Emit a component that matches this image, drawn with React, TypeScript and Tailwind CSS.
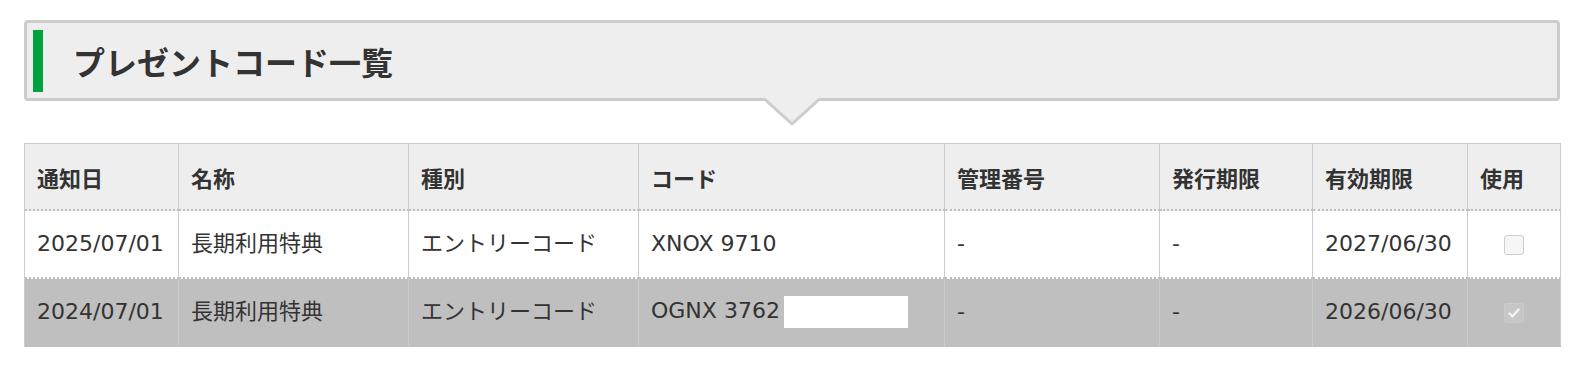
import { Fragment } from 'react'

type GiftCode = {
  notified: string
  name: string
  kind: string
  code: string
  hidden: boolean
  serial: string
  issueLimit: string
  expires: string
  used: boolean
}

const colWidths = [154, 230, 230, 306, 215, 153, 155, 93]

const headers = ['通知日', '名称', '種別', 'コード', '管理番号', '発行期限', '有効期限', '使用']

const codes: GiftCode[] = [
  {
    notified: '2025/07/01',
    name: '長期利用特典',
    kind: 'エントリーコード',
    code: 'XNOX 9710',
    hidden: false,
    serial: '-',
    issueLimit: '-',
    expires: '2027/06/30',
    used: false,
  },
  {
    notified: '2024/07/01',
    name: '長期利用特典',
    kind: 'エントリーコード',
    code: 'OGNX 3762',
    hidden: true,
    serial: '-',
    issueLimit: '-',
    expires: '2026/06/30',
    used: true,
  },
]

function UsedBox({ checked }: { checked: boolean }) {
  if (!checked) {
    return (
      <span className="inline-block w-[20px] h-[20px] rounded-[3px] border border-[#cfcfcf] bg-[#f6f6f6] align-middle" />
    )
  }
  return (
    <span className="inline-flex items-center justify-center w-[20px] h-[20px] rounded-[3px] border border-[#cbcbcb] bg-[#c6c6c6] align-middle">
      <svg width="14" height="14" viewBox="0 0 14 14">
        <path d="M2.5 7.5 L5.5 10.5 L11.5 3.5" fill="none" stroke="#f4f4f4" strokeWidth="2.4" strokeLinecap="round" strokeLinejoin="round" />
      </svg>
    </span>
  )
}

export default function App() {
  // solid column rules, dotted row rules
  const cell =
    'h-[68px] px-[12px] border-solid border-r border-r-[#cccccc] border-b-2 border-b-[#bdbdbd] [border-bottom-style:dotted] align-middle'

  return (
    <div className="w-[1582px] bg-white pt-[20px] pl-[24px] pr-[22px] pb-[20px] text-[#333333] font-['DejaVu_Sans','Noto_Sans_CJK_JP',sans-serif]">
      {/* page heading with the little pointer under it */}
      <div className="relative">
        <div className="flex items-center h-[81px] pl-[6px] bg-[#eeeeee] border-[3px] border-[#cccccc] rounded-[4px]">
          <div className="w-[10px] h-[62px] bg-[#00a23e]" />
          <h1 className="ml-[30px] text-[32px] leading-none font-bold font-['Noto_Sans_CJK_JP',sans-serif] text-[#333333]">
            プレゼントコード一覧
          </h1>
        </div>
        <svg
          className="absolute left-1/2 -translate-x-1/2 top-[calc(100%-3px)]"
          width="54"
          height="28"
          viewBox="0 0 54 28"
        >
          <polygon points="0,0 54,0 27,25.5" fill="#eeeeee" />
          <polyline points="0,1.5 27,26 54,1.5" fill="none" stroke="#cccccc" strokeWidth="3" strokeLinejoin="round" />
        </svg>
      </div>

      <table className="mt-[42px] w-[1536px] table-fixed border-separate border-spacing-0 border-l border-l-[#cccccc]">
        <colgroup>
          {colWidths.map((w, i) => (
            <col key={i} style={{ width: w }} />
          ))}
        </colgroup>
        <thead>
          <tr className="bg-[#eeeeee]">
            {headers.map(h => (
              <th
                key={h}
                className={`${cell} text-left border-t border-t-[#cccccc] font-bold text-[22px] leading-none font-['Noto_Sans_CJK_JP',sans-serif]`}
              >
                {h}
              </th>
            ))}
          </tr>
        </thead>
        <tbody className="text-[22px] leading-none">
          {codes.map(r => (
            <tr key={r.notified} className={r.used ? 'bg-[#bfbfbf]' : 'bg-white'}>
              <td className={`${cell} text-left`}>{r.notified}</td>
              <td className={`${cell} text-left`}>{r.name}</td>
              <td className={`${cell} text-left`}>{r.kind}</td>
              <td className={`${cell} text-left`}>
                <Fragment>
                  {r.code}
                  {r.hidden && (
                    <span className="inline-block ml-[4px] w-[124px] h-[32px] bg-white align-middle" />
                  )}
                </Fragment>
              </td>
              <td className={`${cell} text-left`}>{r.serial}</td>
              <td className={`${cell} text-left`}>{r.issueLimit}</td>
              <td className={`${cell} text-left`}>{r.expires}</td>
              <td className={`${cell} text-center`}>
                <UsedBox checked={r.used} />
              </td>
            </tr>
          ))}
        </tbody>
      </table>
    </div>
  )
}
